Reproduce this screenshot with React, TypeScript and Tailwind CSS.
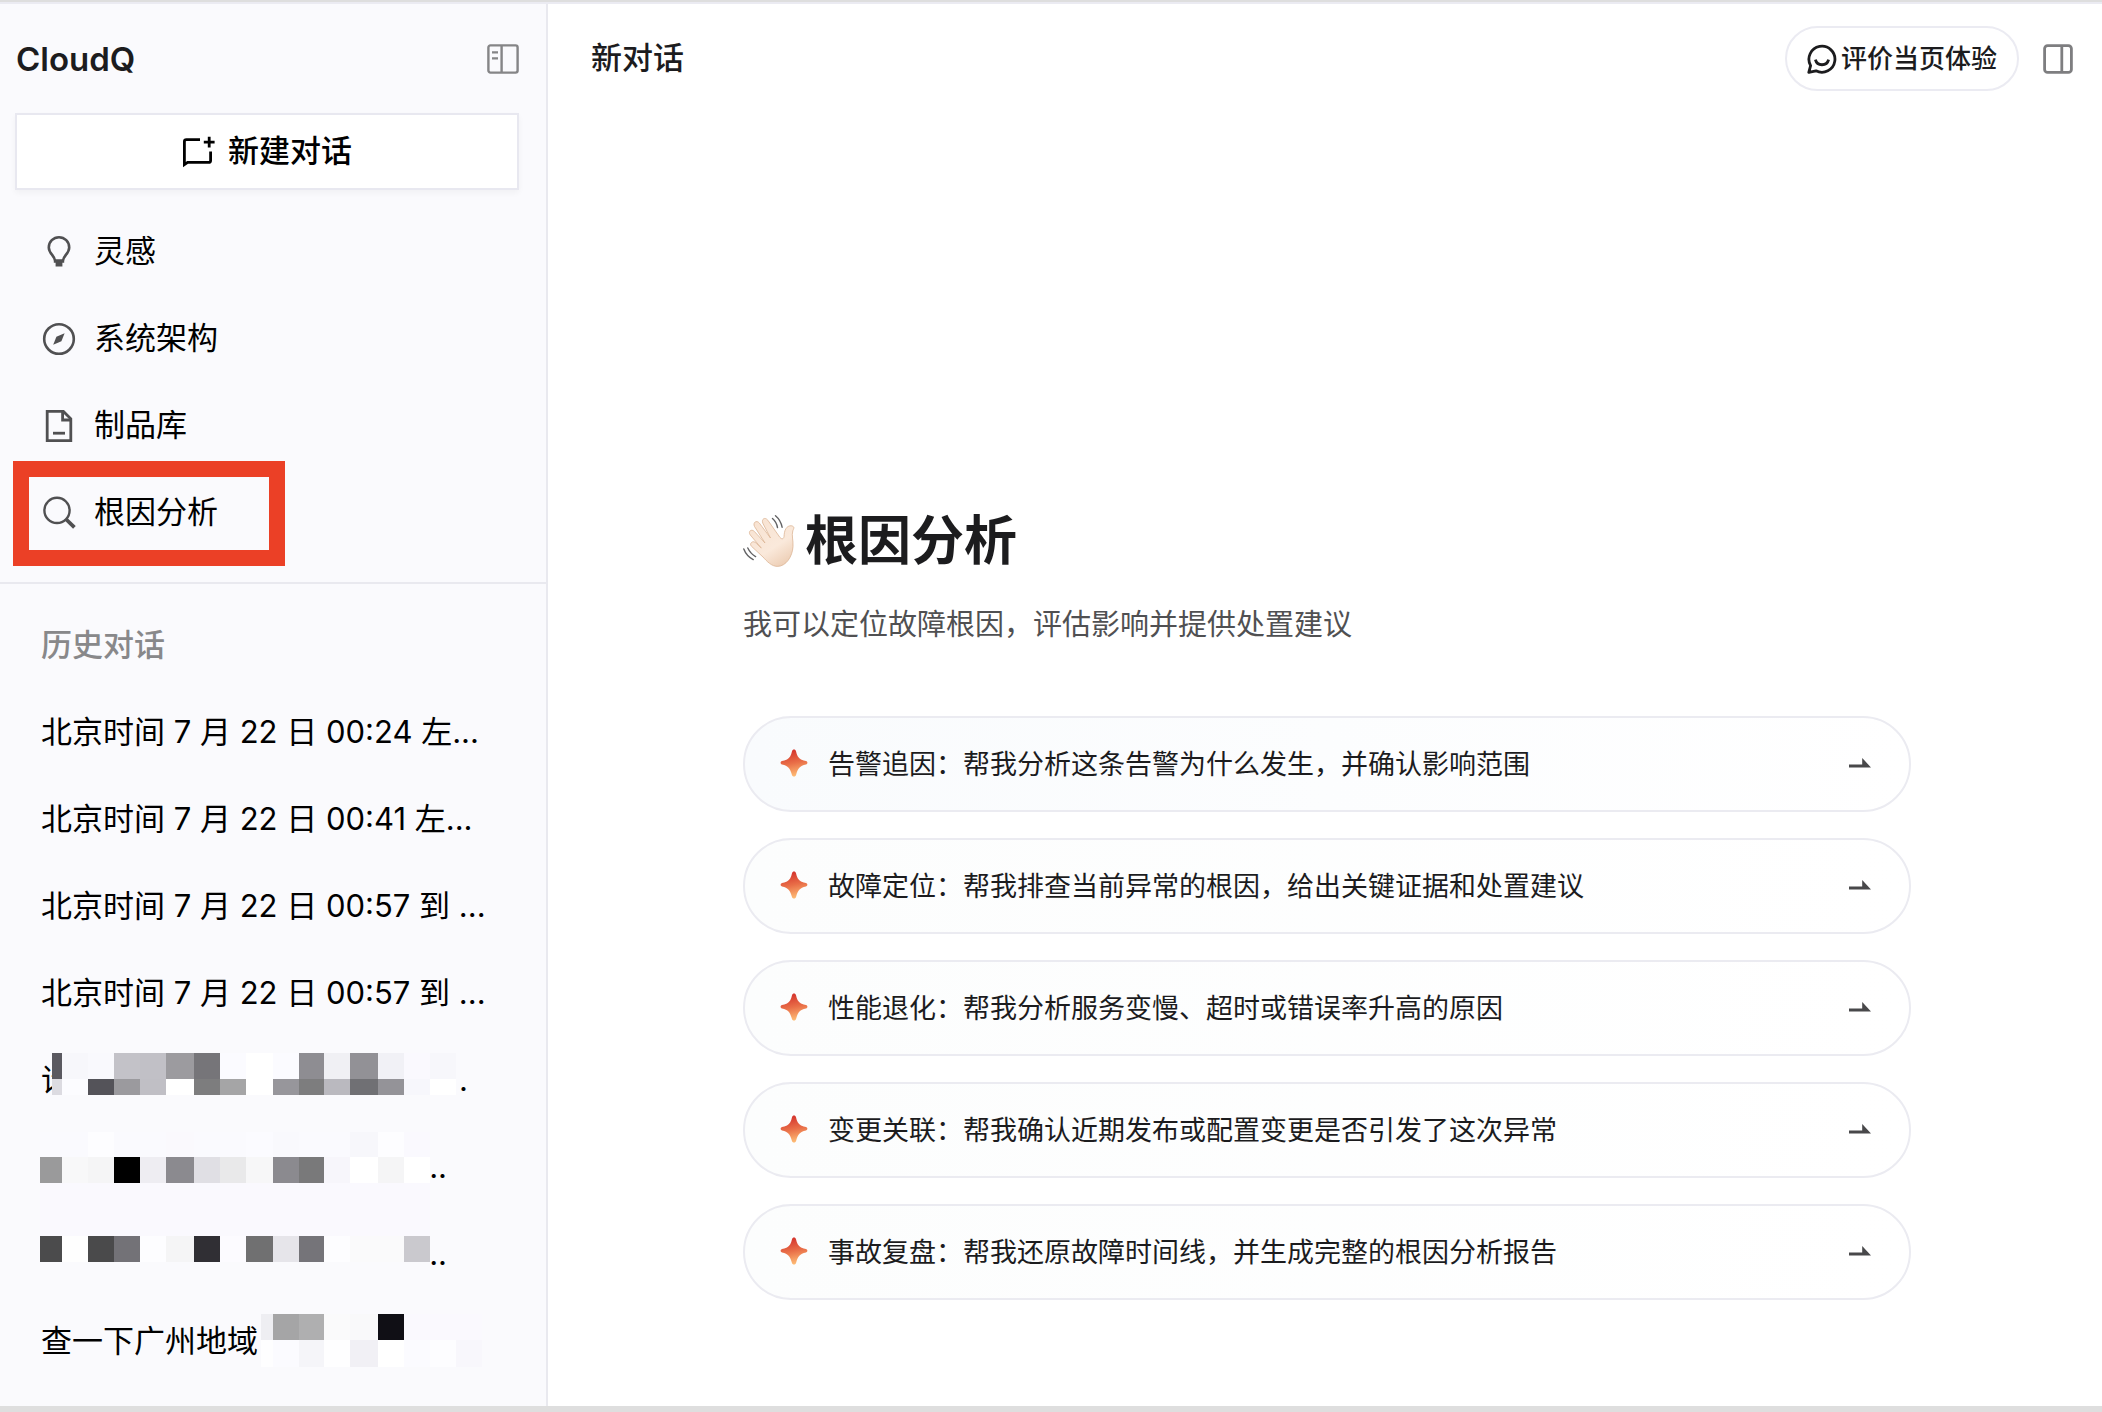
import type { ReactNode } from "react";

const navItems: { label: string; icon: ReactNode }[] = [
    { label: "灵感", icon: <BulbIcon /> },
    { label: "系统架构", icon: <CompassIcon /> },
    { label: "制品库", icon: <FileIcon /> },
    { label: "根因分析", icon: <SearchIcon /> },
];

const history = [
    { text: "北京时间 7 月 22 日 00:24 左...", tail: "", width: "w-auto" },
    { text: "北京时间 7 月 22 日 00:41 左...", tail: "", width: "w-auto" },
    { text: "北京时间 7 月 22 日 00:57 到 ...", tail: "", width: "w-auto" },
    { text: "北京时间 7 月 22 日 00:57 到 ...", tail: "", width: "w-auto" },
    { text: "请", tail: ".", width: "w-[427px]" },
    { text: "", tail: "..", width: "w-[406px]" },
    { text: "", tail: "..", width: "w-[406px]" },
    { text: "查一下广州地域", tail: "", width: "w-auto" },
];

const prompts = [
    { text: "告警追因：帮我分析这条告警为什么发生，并确认影响范围", tint: "from-[#f9fbfd]" },
    { text: "故障定位：帮我排查当前异常的根因，给出关键证据和处置建议", tint: "from-[#fcfdfd]" },
    { text: "性能退化：帮我分析服务变慢、超时或错误率升高的原因", tint: "from-[#fcfdfd]" },
    { text: "变更关联：帮我确认近期发布或配置变更是否引发了这次异常", tint: "from-[#fcfdfd]" },
    { text: "事故复盘：帮我还原故障时间线，并生成完整的根因分析报告", tint: "from-[#fcfdfd]" },
];

// column edges shared by all mosaic strips
const edges = [0, 22, 48, 74, 100, 126, 154, 180, 206, 233, 259, 284, 310, 338, 364, 390, 416, 442];

const strips = [
    { y: 17, h: 26, start: 0, colors: ["#5a5960", "#f7f7fb", "#f9f9fd", "#c3c2c8", "#c1c0c6", "#9c9b9f", "#767579", "#fbfbff", "#ffffff", "#fbfbff", "#8e8d92", "#f0f0f4", "#929196", "#f1f1f6", "#faf9fe", "#f7f7fb"] },
    { y: 43, h: 16, start: 0, colors: ["#dcdbe1", "#fcfcff", "#545359", "#9b9a9e", "#c0bfc5", "#ffffff", "#7d7d7e", "#a5a5a6", "#ffffff", "#97969b", "#7d7d7e", "#bab9bf", "#707074", "#949398", "#f7f7fc", "#ffffff"] },
    { y: 96, h: 25, start: 0, colors: ["#fafafe", "#fafafe", "#fdfdff", "#fafafe", "#fafafe", "#faf9fd", "#fafafe", "#fafafe", "#fbfbff", "#f9f9fd", "#fafafe", "#fafafe", "#f7f7fb", "#fdfdff", "#faf9fe"] },
    { y: 121, h: 26, start: 0, colors: ["#9a9a9b", "#f8f8f9", "#f5f5f6", "#000000", "#eeedf2", "#8b8a8f", "#e0dfe4", "#e9e9ea", "#f7f7f8", "#8b8a8f", "#79797a", "#f7f6fb", "#ffffff", "#f5f5f6", "#ffffff"] },
    { y: 200, h: 26, start: 0, colors: ["#4b4b4c", "#fefefe", "#4a4a4b", "#737277", "#fdfdff", "#f5f5f6", "#302f34", "#fcfbff", "#707071", "#e6e5ea", "#757479", "#fdfdff", "#fafafb", "#fafafb", "#cac9ce"] },
    { y: 278, h: 26, start: 8, colors: ["#eeeef2", "#a5a5a6", "#afafb0", "#fafafb", "#f9f9fa", "#100f15", "#faf9fe", "#faf9fe", "#faf9fe"] },
    { y: 304, h: 27, start: 8, colors: ["#fefeff", "#fbfbff", "#f5f5f9", "#fefeff", "#f1f0f5", "#ffffff", "#fbfbff", "#fdfdff", "#f8f7fc"] },
];

function BulbIcon() {
    return (
        <svg viewBox="0 0 34 34" className="size-[34px]" fill="none" stroke="#505052" strokeWidth="2.6">
            <path d="M13 25.5C12.6 20.6 6.8 18.5 6.8 12.4a10.2 10.2 0 0 1 20.4 0c0 6.1-5.8 8.2-6.2 13.1" />
            <path d="M11.8 24.2h10.4v3.6h-1.8v3.6h-6.8v-3.6h-1.8z" fill="#505052" stroke="none" />
        </svg>
    );
}

function CompassIcon() {
    return (
        <svg viewBox="0 0 34 34" className="size-[34px]">
            <circle cx="17" cy="17" r="14.8" fill="none" stroke="#505052" strokeWidth="2.6" />
            <path d="M22.6 11.2 19.4 19.2 11.2 22.8 14.4 14.8z" fill="#505052" />
        </svg>
    );
}

function FileIcon() {
    return (
        <svg viewBox="0 0 34 34" className="size-[34px]" fill="none" stroke="#505052" strokeWidth="2.8">
            <path d="M5.2 2.4H21.4L28.8 9.8V31.6H5.2z" />
            <path d="M20.6 2.4V11H28.8" />
            <path d="M11 24.2H23" />
        </svg>
    );
}

function SearchIcon() {
    return (
        <svg viewBox="0 0 34 34" className="size-[34px]" fill="none" stroke="#505052">
            <circle cx="15" cy="14.4" r="12.6" strokeWidth="2.4" />
            <path d="M23.8 23 32.4 31.4" strokeWidth="3.8" />
        </svg>
    );
}

function NewChatIcon() {
    return (
        <svg viewBox="0 0 33 32" className="h-8 w-[33px]" fill="none" stroke="#000">
            <path d="M18 3.6H4.4Q2.4 3.6 2.4 5.6V28.6L5.6 26.4H26.6Q28.6 26.4 28.6 24.4V15.6" strokeWidth="2.8" />
            <path d="M27.2.8V11.4M21.8 6.2H32.6" strokeWidth="2.8" />
        </svg>
    );
}

function SmileIcon() {
    return (
        <svg viewBox="0 0 30 30" className="size-[30px]" fill="none" stroke="#1c1c1e" strokeWidth="2.8">
            <path d="M1.8 28.4 3.6 21.6A13 13 0 1 1 9 26.8z" strokeLinejoin="round" />
            <path d="M8.4 15.6a6.8 6.8 0 0 0 13.2 0" />
        </svg>
    );
}

function SparkIcon() {
    return (
        <svg viewBox="0 0 28 28" className="size-7 shrink-0">
            <defs>
                <linearGradient id="spark" x1="0.4" y1="0" x2="0.6" y2="1">
                    <stop offset="0" stopColor="#d3302b" />
                    <stop offset="0.5" stopColor="#e96f48" />
                    <stop offset="1" stopColor="#ffc178" />
                </linearGradient>
            </defs>
            <path
                d="M14 .4C15 .4 15.7 1 16 2.2C16.9 6 18 9 21 10.4C22.8 11.2 24.600 11.500 26 12C27.900 12.700 27.900 14.900 26 15.500C19.600 17.100 18 19 16.200 25.500C15.800 27 15.200 27.600 14 27.600S12.200 27 11.800 25.500C10 19 8.400 17.100 2 15.500C.1 14.900 .1 12.700 2 12C3.400 11.500 5.200 11.200 7 10.400C10 9 11.100 6 12 2.200C12.300 1 13 .4 14 .4z"
                fill="url(#spark)"
            />
        </svg>
    );
}

function WaveIcon() {
    return (
        <svg viewBox="0 0 52 52" className="size-[52px]" role="img" aria-label="挥手">
            <defs>
                <linearGradient id="skin" x1="0.2" y1="0" x2="0.8" y2="1">
                    <stop offset="0" stopColor="#f8e3d2" />
                    <stop offset="0.6" stopColor="#fae9db" />
                    <stop offset="1" stopColor="#ecccb2" />
                </linearGradient>
            </defs>
            <path
                d="M8.5 27.5c1.6-1.4 3.2-.8 4.8.8l5 4.7-11-13c-2.6-3.4 1-6.600 4-3.600L22 28 11.500 11.500C9.500 7.500 13.500 4.800 16.300 8L27.500 23 19.800 8.200C18.200 4 22 1.600 24.800 5.200L37 22.500c1.800 2 3.600 1.600 4-.8.3-2.600.2-5.500 2-8.200 2-3 5.800-3.600 7.600-1.600.8 1-.2 2.200-.8 4-1.400 4.500.6 9.500.2 15.500C49.500 41.500 43 51.400 34.500 51.400c-6 0-10.500-5-14.500-9.400L8.500 31.300c-1.400-1.400-1-3 0-3.800z"
                fill="url(#skin)"
                stroke="#dcb595"
                strokeWidth="0.8"
            />
            <g fill="none" stroke="#626264" strokeWidth="1.4" strokeLinecap="round">
                <path d="M29.5 3.5q4 3.5 5 9M32.5.8q5.2 4.4 6.6 11.4M4.8 33q2.6 5.600 7.800 8.600M.8 34q2.600 7 9.400 10.600" />
            </g>
        </svg>
    );
}

function Mosaic() {
    return (
        <svg viewBox="0 0 442 331" className="pointer-events-none absolute left-10 top-[452px] h-[331px] w-[442px]" shapeRendering="crispEdges" aria-hidden="true">
            <rect x="0" y="147" width="390" height="53" fill="#faf9fe" />
            {strips.map((strip) =>
                strip.colors.map((color, i) => {
                    const col = strip.start + i;
                    // the first strip pair and the last pair begin part way into a column
                    let x = edges[col];
                    if (col === 0 && strip.y < 60) x = 12;
                    if (strip.start === 8 && i === 0) x = 221;
                    return <rect key={`${strip.y}-${i}`} x={x} y={strip.y} width={edges[col + 1] - x} height={strip.h} fill={color} />;
                })
            )}
        </svg>
    );
}

function Sidebar() {
    return (
        <aside className="w-[548px] shrink-0 border-r-2 border-[#e9e9ef] bg-[#fafafd]">
            <div className="flex h-[109px] items-center justify-between pl-4 pr-[27px]">
                <h1 className="text-[33px] font-semibold leading-10 text-[#1c1c1e]">CloudQ</h1>
                <button aria-label="收起侧栏">
                    <svg viewBox="0 0 32 30" className="h-[30px] w-8" fill="none" stroke="#858587" strokeWidth="2.4">
                        <rect x="1.4" y="1.4" width="29.2" height="27.2" rx="2" />
                        <path d="M14.6 1V29M5 8.4H11M5 14.4H11" />
                    </svg>
                </button>
            </div>
            <div className="pl-[15px] pr-[27px]">
                <button className="flex h-[77px] w-full items-center justify-center gap-[13px] border-2 border-[#e8e8f0] bg-white text-[31px] font-medium text-black shadow-[0_3px_6px_rgba(0,0,0,0.04)]">
                    <NewChatIcon />
                    新建对话
                </button>
            </div>
            <nav className="border-b-2 border-[#e9e9ef] pb-[26px] pt-[18px]">
                {navItems.map((item, i) => (
                    <a key={item.label} href="#" className="relative flex h-[87px] items-center gap-[18px] pl-[42px] text-[31px] text-black">
                        {item.icon}
                        {item.label}
                        {i === navItems.length - 1 && (
                            <span className="absolute -top-2 left-[13px] h-[105px] w-[272px] border-[16px] border-[#eb4026]" />
                        )}
                    </a>
                ))}
            </nav>
            <section className="relative pt-[18px]">
                <h2 className="flex h-[87px] items-center pl-[41px] text-[31px] font-medium text-[#88888a]">历史对话</h2>
                <ul>
                    {history.map((item, i) => (
                        <li key={i} className="h-[87px] pl-[41px]">
                            <a href="#" className={`flex h-full items-center justify-between whitespace-nowrap text-[31px] text-black ${item.width}`}>
                                <span>{item.text}</span>
                                <span>{item.tail}</span>
                            </a>
                        </li>
                    ))}
                </ul>
                <Mosaic />
            </section>
        </aside>
    );
}

export default function App() {
    return (
        <div className="min-h-screen border-t-2 border-[#dedede] bg-white font-['Inter','Noto_Sans_CJK_SC',sans-serif]">
            <div className="flex min-h-[calc(100vh-2px)] border-b-[6px] border-t-2 border-b-[#dedede] border-t-[#ebebf2]">
                <Sidebar />
                <main className="min-w-0 flex-1">
                    <header className="flex h-[109px] items-center pl-[43px] pr-[29px] text-[#1c1c1e]">
                        <h2 className="text-[31px] font-medium">新对话</h2>
                        <button className="ml-auto flex h-[65px] items-center gap-1 rounded-full border-2 border-[#ebebf2] px-5 text-[26px] font-medium">
                            <SmileIcon />
                            评价当页体验
                        </button>
                        <button aria-label="展开右侧面板" className="ml-6">
                            <svg viewBox="0 0 30 30" className="size-[30px]" fill="none" stroke="#7e7e80" strokeWidth="2.8">
                                <rect x="1.6" y="1.6" width="26.8" height="26.8" rx="3" />
                                <path d="M18.8 1.6V28.4" />
                            </svg>
                        </button>
                    </header>
                    <div className="pl-1">
                        <div className="mx-auto max-w-[1168px] pt-[388px]">
                            <div className="flex h-20 items-center gap-[10px]">
                                <WaveIcon />
                                <h3 className="text-[53px] font-bold leading-[80px] text-[#1c1c1e]">根因分析</h3>
                            </div>
                            <p className="mt-6 text-[29px] leading-10 text-[#505052]">我可以定位故障根因，评估影响并提供处置建议</p>
                            <div className="mt-[71px] flex flex-col gap-[26px]">
                                {prompts.map((prompt) => (
                                    <button
                                        key={prompt.text}
                                        className={`flex h-24 items-center gap-5 rounded-full border-2 border-[#ebebf1] bg-linear-to-r to-white pb-[2px] pl-[35px] pr-[38px] text-left text-[27px] text-[#1c1c1e] ${prompt.tint}`}
                                    >
                                        <SparkIcon />
                                        <span className="flex-1 pt-1">{prompt.text}</span>
                                        <svg viewBox="0 0 22 10" className="h-[10px] w-[22px]" fill="#48484a">
                                            <path d="M0 6.4H13.2V0L22 9.4H0z" />
                                        </svg>
                                    </button>
                                ))}
                            </div>
                        </div>
                    </div>
                </main>
            </div>
        </div>
    );
}
